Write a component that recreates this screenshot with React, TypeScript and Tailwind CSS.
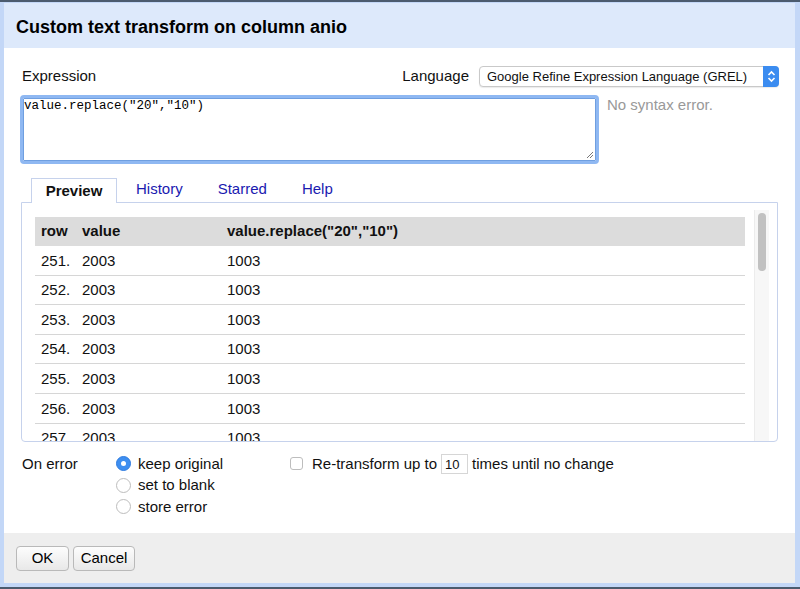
const rows = [251, 252, 253, 254, 255, 256, 257];

function Radio({ checked, label }: { checked?: boolean; label: string }) {
  return (
    <div className="flex items-center h-[21.5px]">
      {checked ? (
        <span className="w-[15px] h-[15px] rounded-full bg-[#3d8ef0] border border-[#2f7ce0] flex items-center justify-center">
          <span className="w-[5px] h-[5px] rounded-full bg-white" />
        </span>
      ) : (
        <span className="w-[15px] h-[15px] rounded-full bg-white border border-[#bdbdbd]" />
      )}
      <span className="ml-[7px]">{label}</span>
    </div>
  );
}

export default function App() {
  return (
    <div
      className="w-[800px] h-[589px] flex flex-col bg-[#c3d7f7] text-[15px] text-[#111] overflow-hidden"
      style={{ fontFamily: '"Liberation Sans", Arial, sans-serif' }}
    >
      <div className="h-[2px] bg-[#4b5b6e] shrink-0" />
      <div className="flex-1 flex flex-col ml-[4px] mr-[5px] mt-[1px]">
        {/* header */}
        <div className="h-[45px] bg-[#dde9fb] flex items-center pl-[12px] pt-[4px] shrink-0">
          <h1 className="text-[18px] font-bold text-black">Custom text transform on column anio</h1>
        </div>

        {/* body */}
        <div className="h-[485px] bg-white shrink-0 pl-[17px] pr-[16px]">
          <div className="flex items-center justify-between pt-[18px] h-[39px]">
            <span className="pl-[1px]">Expression</span>
            <div className="flex items-center">
              <span className="mr-[10px]">Language</span>
              <div className="w-[300px] h-[21px] bg-white border border-[#c9c9c9] rounded-[4px] flex items-center justify-between pl-[7px] text-[13px] shadow-[0_1px_1px_rgba(0,0,0,0.08)]">
                <span>Google Refine Expression Language (GREL)</span>
                <span className="w-[16px] h-[21px] -mr-px bg-[#3b8cf0] rounded-r-[4px] flex items-center justify-center">
                  <svg width="9" height="13" viewBox="0 0 9 13" fill="none" stroke="white" strokeWidth="1.6">
                    <path d="M1.5 5 L4.5 2 L7.5 5" />
                    <path d="M1.5 8 L4.5 11 L7.5 8" />
                  </svg>
                </span>
              </div>
            </div>
          </div>

          <div className="flex items-start mt-[8px]">
            <div className="relative w-[579px] h-[69px] -ml-[1px] border-[3px] border-[#8fb8f2] rounded-[4px] bg-white">
              <div className="absolute inset-0 border border-[#6f9fe0] rounded-[1px]" />
              <div
                className="pl-[1px] pt-[1px] text-[12.5px] leading-[15px] text-black"
                style={{ fontFamily: '"Liberation Mono", "Courier New", monospace' }}
              >
                value.replace("20","10")
              </div>
              <svg className="absolute right-[2px] bottom-[2px]" width="8" height="8" viewBox="0 0 8 8" stroke="#777" strokeWidth="1">
                <path d="M1 7 L7 1 M4 7 L7 4" />
              </svg>
            </div>
            <span className="ml-[8px] -mt-[1px] text-[#999]">No syntax error.</span>
          </div>

          {/* tabs */}
          <div className="mt-[14px] flex items-end h-[24px] pl-[10px] relative">
            <div className="w-[86px] h-[25px] border border-b-0 border-[#c6d2ec] bg-white flex items-center justify-center font-bold -mb-px relative z-10">
              Preview
            </div>
            <span className="text-[#1a1ab0] ml-[19px] mb-[2px]">History</span>
            <span className="text-[#1a1ab0] ml-[35px] mb-[2px]">Starred</span>
            <span className="text-[#1a1ab0] ml-[35px] mb-[2px]">Help</span>
          </div>
          <div className="w-[757px] h-[240px] border border-[#c6d2ec] rounded-b-[4px] overflow-hidden flex pl-[13px] pt-[14px] pr-[6px]">
            <div className="w-[710px]">
              <div className="h-[29px] bg-[#dcdcdc] flex items-center font-bold">
                <span className="w-[47px] pl-[6px]">row</span>
                <span className="w-[145px]">value</span>
                <span>value.replace("20","10")</span>
              </div>
              {rows.map((r) => (
                <div key={r} className="h-[29.6px] border-b border-[#d6d6d6] flex items-center pt-[1px]">
                  <span className="w-[47px] pl-[6px]">{r}.</span>
                  <span className="w-[145px]">2003</span>
                  <span>1003</span>
                </div>
              ))}
            </div>
            <div className="ml-[9px] w-[15px] h-[232px] bg-[#f7f7f7] border-l border-[#ececec] -mt-[7px] flex justify-center pt-[3px]">
              <div className="w-[8px] h-[58px] rounded-full bg-[#c1c1c1]" />
            </div>
          </div>

          {/* options */}
          <div className="flex mt-[11px] pl-[1px]">
            <span className="w-[94px] h-[21.5px] flex items-center">On error</span>
            <div className="flex flex-col w-[174px]">
              <Radio checked label="keep original" />
              <Radio label="set to blank" />
              <Radio label="store error" />
            </div>
            <div className="flex items-center h-[21.5px]">
              <span className="w-[13px] h-[13px] rounded-[3px] border border-[#bdbdbd] bg-white" />
              <span className="ml-[9px]">Re-transform up to</span>
              <span className="ml-[4px] w-[27px] h-[20px] border border-[#d6d6d6] bg-white text-[13px] flex items-center pl-[3px] mt-[1px]">10</span>
              <span className="ml-[4px]">times until no change</span>
            </div>
          </div>
        </div>

        {/* footer */}
        <div className="h-[50px] bg-[#eeeeee] shrink-0 flex items-center pl-[12px] gap-[4px]">
          <button className="w-[53px] h-[25px] rounded-[4px] border border-[#b9b9b9] bg-gradient-to-b from-[#fdfdfd] to-[#e8e8e8] text-[15px] text-black">
            OK
          </button>
          <button className="w-[62px] h-[25px] rounded-[4px] border border-[#b9b9b9] bg-gradient-to-b from-[#fdfdfd] to-[#e8e8e8] text-[15px] text-black">
            Cancel
          </button>
        </div>
      </div>
      <div className="h-[2px] bg-[#4b5b6e] shrink-0" />
    </div>
  );
}
